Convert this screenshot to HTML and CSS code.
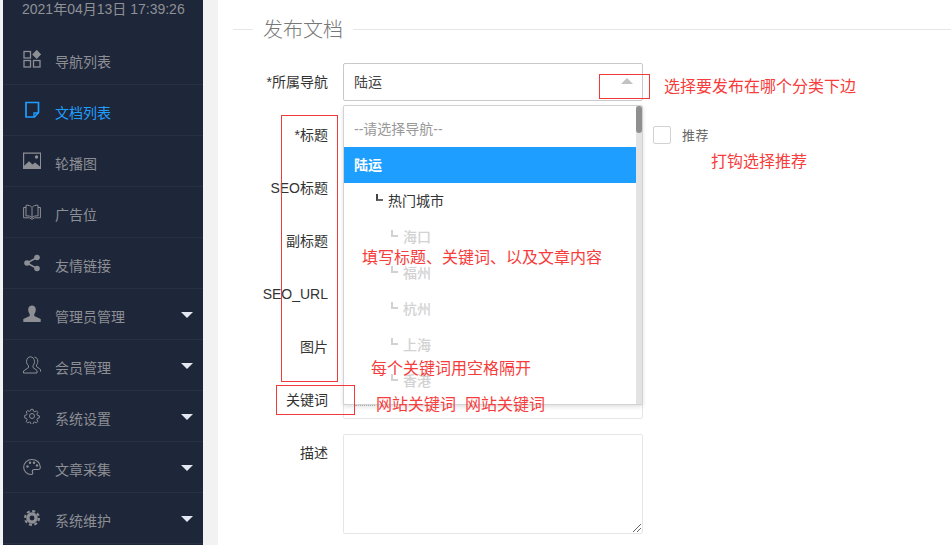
FILE: index.html
```html
<!DOCTYPE html>
<html lang="zh">
<head>
<meta charset="utf-8">
<title>发布文档</title>
<link rel="stylesheet" href="styles.css">
</head>
<body>
<div class="page">
  <aside class="sidebar">
    <div class="clock">2021年04月13日 17:39:26</div>
    <nav class="menu">
      <a class="item"><svg class="ico" viewBox="0 0 18 18" fill="none" stroke="currentColor" stroke-width="1.3"><rect x="1" y="1.5" width="6.5" height="6.5"/><rect x="1" y="10.5" width="6.5" height="6.5"/><rect x="10.5" y="10.5" width="6.5" height="6.5"/><path d="M13.7 0.8l3.6 3.6-3.6 3.6-3.6-3.6z" fill="currentColor"/></svg><span>导航列表</span></a>
      <a class="item active"><svg class="ico" viewBox="0 0 18 18" fill="none" stroke="currentColor" stroke-width="1.7"><path d="M3 1.5h12.500v10l-4 4.500H3z"/><path d="M11 16v-4h4.500" stroke-width="1.400"/></svg><span>文档列表</span></a>
      <a class="item"><svg class="ico" viewBox="0 0 18 18"><path fill-rule="evenodd" fill="currentColor" d="M0 .5h18v16.500H0zM1.200 1.700v12l4.800-4.500 3.500 3.200 2.500-2 5 4V1.700z"/><circle cx="13.500" cy="5" r="1.700" fill="currentColor"/></svg><span>轮播图</span></a>
      <a class="item"><svg class="ico" viewBox="0 0 18 18" fill="none" stroke="currentColor" stroke-width="1"><path d="M9 4.500C7.500 2.500 5.500 2 3 2.300v10.700c2.500-.3 4.500 0 6 1.500 1.500-1.500 3.500-1.800 6-1.500V2.300C12.500 2 10.500 2.500 9 4.500zM9 4.500v10M3 4.500H.6v10.300h6l2.400 1.500 2.400-1.500h6V4.500H15"/></svg><span>广告位</span></a>
      <a class="item"><svg class="ico" viewBox="0 0 18 18" fill="currentColor"><circle cx="14" cy="3.500" r="2.800"/><circle cx="14" cy="14.500" r="2.800"/><circle cx="4" cy="9" r="2.800"/><path d="M4 9L14 3.500M4 9l10 5.500" stroke="currentColor" stroke-width="1.500"/></svg><span>友情链接</span></a>
      <a class="item more"><svg class="ico" viewBox="0 0 18 18" fill="currentColor"><path d="M5.200 4.500C5.200 2 7 .5 9 .5s3.800 1.500 3.800 4c0 2-.8 3.500-1.500 4.500v2l6.400 3V17H.3v-3l6.400-3V9C6 8 5.200 6.500 5.200 4.500z"/></svg><span>管理员管理</span></a>
      <a class="item more"><svg class="ico" viewBox="0 0 18 18" fill="none" stroke="currentColor" stroke-width="1"><path d="M3.500 5.500C3.500 2.800 5.300 .8 7.500 .8s4 2 4 4.700c0 2-.8 3.300-1.500 4.200v1.800l4 3v2.500H.5V15l5-3.500V9.700C4.500 8.800 3.500 7.500 3.500 5.500z"/><path d="M11.500 1.200c2 0 3.300 1.800 3.300 4 0 1.800-.7 3-1.300 3.800v1.500l4 3v2"/></svg><span>会员管理</span></a>
      <a class="item more"><svg class="ico small" viewBox="0 0 18 18" fill="none" stroke="currentColor" stroke-width="1.100"><circle cx="9" cy="9" r="2.800"/><path d="M7.800 1.500h2.400l.4 2.100 1.500.7 1.900-1 1.600 1.700-1.100 1.800.6 1.500 2.100.5v2.400l-2.100.5-.6 1.500 1.100 1.800-1.600 1.700-1.900-1-1.500.7-.4 2.100H7.800l-.4-2.100-1.500-.7-1.900 1-1.600-1.700 1.100-1.800-.6-1.500-2.100-.5V8.300l2.100-.5.6-1.500-1.100-1.800 1.600-1.700 1.900 1 1.500-.7z"/></svg><span>系统设置</span></a>
      <a class="item more"><svg class="ico" viewBox="0 0 18 18" fill="none" stroke="currentColor" stroke-width="1.100"><path d="M9 1.500C4 1.500.7 5 .7 9.200c0 4 3.300 7.300 7.300 7.300 1.800 0 2-1.200 1.500-2.300-.6-1.300.2-2.700 1.800-2.700h3.700c1.700 0 2.500-1 2.300-2.800C17 4.500 13.500 1.500 9 1.500z"/><g fill="currentColor" stroke="none"><circle cx="4.500" cy="8.500" r="1.200"/><circle cx="7" cy="4.800" r="1.200"/><circle cx="11" cy="4.800" r="1.200"/><circle cx="14" cy="7.500" r="1.200"/></g></svg><span>文章采集</span></a>
      <a class="item more"><svg class="ico small" viewBox="0 0 18 18"><circle cx="9" cy="9" r="7.800" fill="none" stroke="currentColor" stroke-width="2.400" stroke-dasharray="3.400 2.720"/><path fill-rule="evenodd" fill="currentColor" d="M9 2.500a6.500 6.500 0 1 0 0 13 6.500 6.500 0 0 0 0-13zM9 6.200a2.800 2.800 0 1 1 0 5.600 2.800 2.800 0 0 1 0-5.600z"/></svg><span>系统维护</span></a>
    </nav>
  </aside>

  <main class="content">
    <div class="legend"><span class="legend-text">发布文档</span></div>
    <form class="form">
      <div class="row">
        <label class="lbl">*所属导航</label>
        <div class="select"><span>陆运</span><i class="caret"></i></div>
      </div>
      <div class="row">
        <label class="lbl">*标题</label>
        <div class="field"></div>
        <div class="check"><i class="box"></i><span>推荐</span></div>
      </div>
      <div class="row"><label class="lbl">SEO标题</label><div class="field"></div></div>
      <div class="row"><label class="lbl">副标题</label><div class="field"></div></div>
      <div class="row"><label class="lbl">SEO_URL</label><div class="field"></div></div>
      <div class="row"><label class="lbl">图片</label><div class="field"></div></div>
      <div class="row"><label class="lbl">关键词</label><div class="field light"></div></div>
      <div class="row top"><label class="lbl">描述</label><div class="area"><svg class="grip" viewBox="0 0 9 9" fill="none" stroke="#666" stroke-width="1"><path d="M1 9L9 1M5 9l4-4"/></svg></div></div>
    </form>

    <div class="dropdown">
      <div class="opts">
        <div class="opt hint">--请选择导航--</div>
        <div class="opt on">陆运</div>
        <div class="opt lv2"><i class="tree"></i>热门城市</div>
        <div class="opt lv3"><i class="tree"></i>海口</div>
        <div class="opt lv3"><i class="tree"></i>福州</div>
        <div class="opt lv3"><i class="tree"></i>杭州</div>
        <div class="opt lv3"><i class="tree"></i>上海</div>
        <div class="opt lv3"><i class="tree"></i>香港</div>
      </div>
      <div class="bar"><i class="thumb"></i></div>
    </div>

    <i class="mark mark-a"></i>
    <i class="mark mark-b"></i>
    <i class="mark mark-c"></i>
    <i class="dots"></i>
    <span class="note note-a">选择要发布在哪个分类下边</span>
    <span class="note note-b">打钩选择推荐</span>
    <span class="note note-c">填写标题、关键词、以及文章内容</span>
    <span class="note note-d">每个关键词用空格隔开</span>
    <span class="note note-e">网站关键词&nbsp;&nbsp;网站关键词</span>
  </main>
</div>
</body>
</html>
```
FILE: styles.css
```css
* { box-sizing: border-box; }
html, body { margin: 0; height: 100%; overflow: hidden; }
body {
  background: #f2f2f2;
  font-family: "Liberation Sans", "Noto Sans CJK SC", sans-serif;
  font-size: 14px;
}
.page { display: flex; height: 545px; padding-left: 3px; }

.sidebar { width: 200px; flex: none; background: #1e2639; color: #8d8f94; }
.clock { height: 34px; padding: 1px 0 0 19px; line-height: 17px; font-size: 14px; color: #8f9196; }
.menu { display: flex; flex-direction: column; }
.item {
  display: flex; align-items: center; height: 51px; padding-left: 20px;
  border-bottom: 1px solid #272f43; position: relative;
}
.item span { padding-top: 4px; }
.ico { width: 18px; height: 18px; margin-right: 14px; flex: none; }
.ico.small { width: 16px; height: 16px; margin: 0 15px 0 1px; }
.active { color: #1e9fff; }
.more::after {
  content: ""; position: absolute; left: 178px; top: 23px;
  border-style: solid; border-width: 6px 6px 0; border-color: #e4e8f2 transparent transparent;
}

.content { flex: 1; margin-left: 15px; background: #fff; position: relative; color: #333; }
.legend { display: flex; align-items: center; height: 59px; padding: 0 0 0 15px; }
.legend::before { content: ""; width: 20px; border-top: 1px solid #e6e6e6; }
.legend::after { content: ""; flex: 1; border-top: 1px solid #e6e6e6; }
.legend-text { padding: 0 10px; font-size: 20px; font-weight: 300; color: #777; line-height: 24px; }

.form { display: flex; flex-direction: column; gap: 15px; padding-top: 4px; }
.row { display: flex; align-items: center; height: 38px; }
.row.top { align-items: flex-start; height: 100px; }
.lbl { width: 110px; text-align: right; color: #333; font-size: 14px; line-height: 16px; margin: 0 15px 1px 0; }
.top .lbl { padding-top: 11px; margin-bottom: 0; }
.select, .field {
  width: 300px; height: 38px; border: 1px solid #c9c9c9; border-radius: 2px;
  display: flex; align-items: center; justify-content: space-between; padding: 0 9px 2px 10px; color: #444; font-size: 14px;
}
.field { border-color: #e6e6e6; }
.caret { border-style: solid; border-width: 0 6px 6px; border-color: transparent transparent #c2c2c2; }
.check { display: flex; align-items: center; margin-left: 10px; color: #666; font-size: 13px; letter-spacing: .5px; padding-bottom: 2px; }
.box { width: 18px; height: 18px; border: 1px solid #d2d2d2; border-radius: 2px; margin: 2px 11px 0 0; }
.area { width: 300px; height: 100px; border: 1px solid #e6e6e6; border-radius: 2px; position: relative; }
.grip { position: absolute; right: 1px; bottom: 1px; width: 9px; height: 9px; }

.dropdown {
  position: absolute; left: 125px; top: 105px; width: 300px; height: 300px;
  background: #fff; border: 1px solid #d2d2d2; border-radius: 2px;
  box-shadow: 0 2px 4px rgba(0,0,0,.12); display: flex;
}
.opts { flex: 1; padding-top: 5px; }
.opt { height: 36px; line-height: 36px; padding-left: 10px; font-size: 14px; white-space: nowrap; }
.hint { color: #999; }
.on { background: #1e9fff; color: #fff; font-weight: 700; }
.lv2 { padding-left: 32px; color: #333; }
.lv3 { padding-left: 47px; color: #d2d2d2; font-weight: 500; }
.tree {
  display: inline-block; width: 7px; height: 7px; border-left: 2px solid #444; border-bottom: 2px solid #666;
  margin-right: 5px; vertical-align: 5px;
}
.lv3 .tree { border-color: #d2d2d2; }
.bar { width: 6px; background: #e3e3e3; position: relative; margin-right: 0; }
.thumb { display: block; width: 6px; height: 27px; background: #8f8f8f; border-radius: 3px; }

.mark { position: absolute; border: 1px solid #f03a3a; }
.mark-a { left: 381px; top: 74px; width: 51px; height: 25px; }
.mark-b { left: 63px; top: 115px; width: 57px; height: 267px; }
.mark-c { left: 58px; top: 385px; width: 79px; height: 30px; }
.dots { position: absolute; left: 137px; top: 405px; width: 20px; border-top: 1px dotted #aaa; }
.note { position: absolute; color: #f63c3c; font-size: 16px; line-height: 22px; white-space: nowrap; }
.note-a { left: 446px; top: 76px; }
.note-b { left: 493px; top: 151px; }
.note-c { left: 144px; top: 247px; }
.note-d { left: 153px; top: 358px; }
.note-e { left: 158px; top: 394px; }
```
